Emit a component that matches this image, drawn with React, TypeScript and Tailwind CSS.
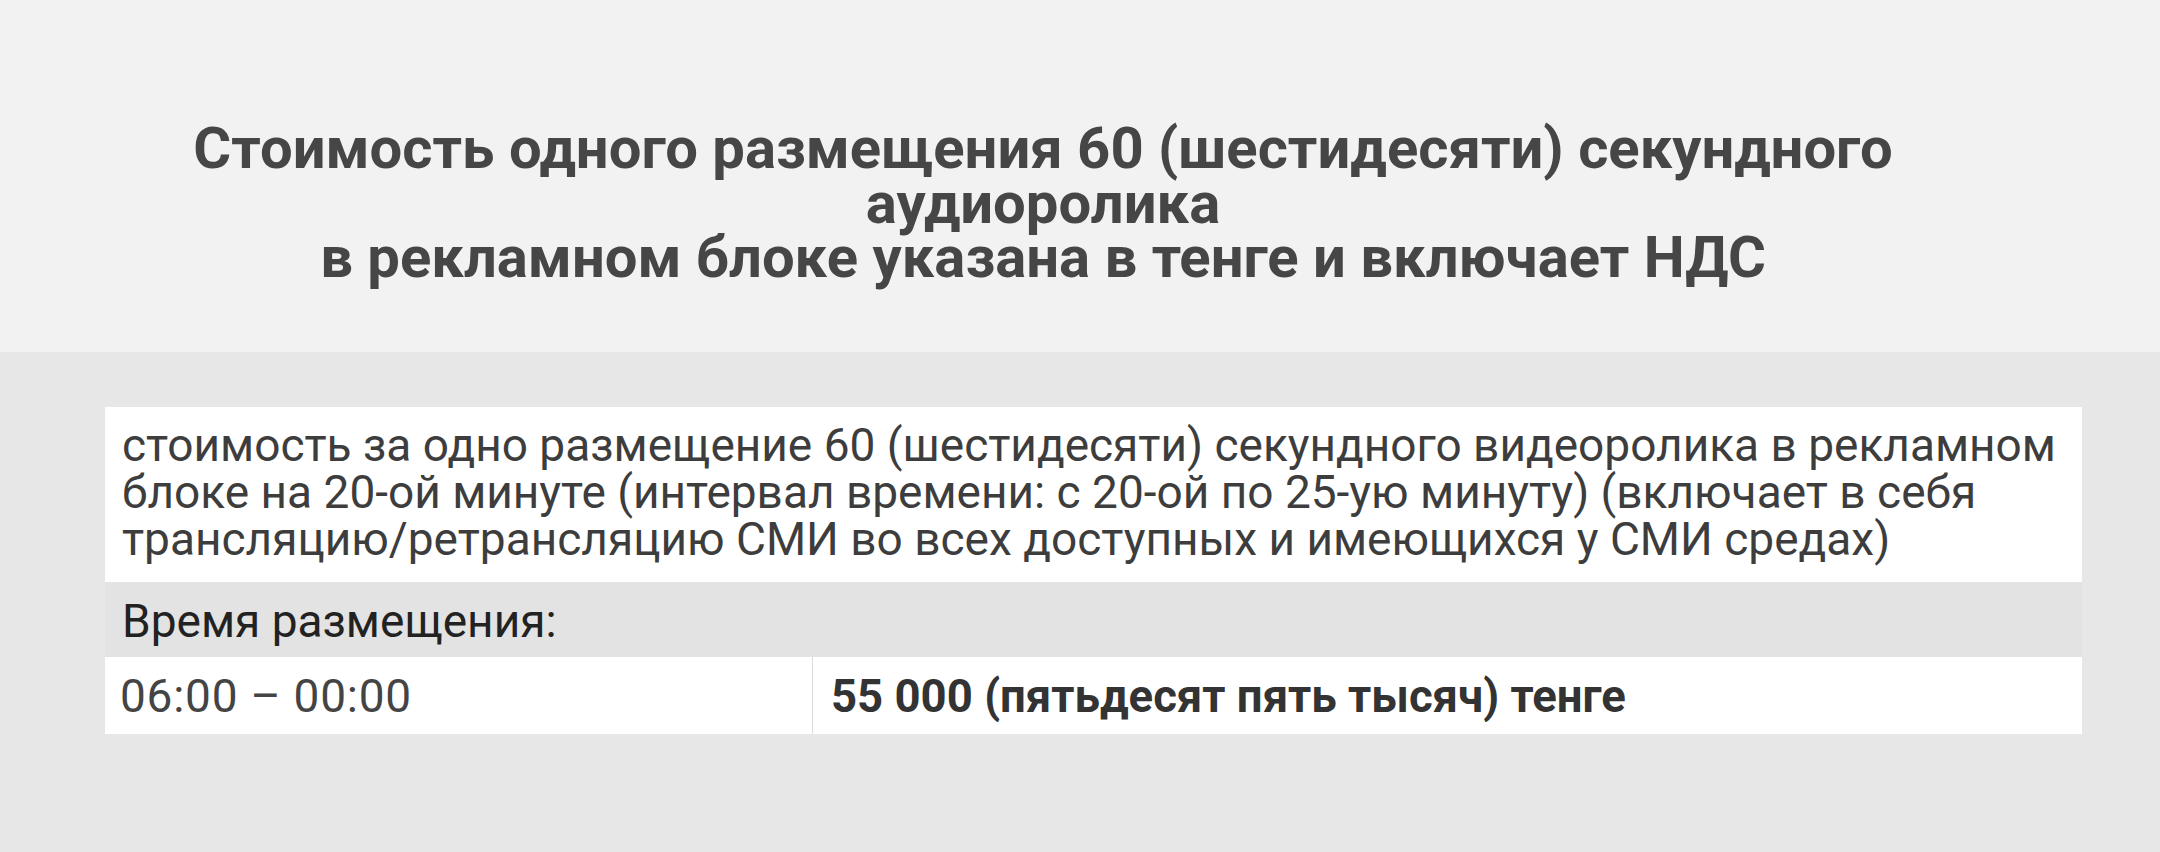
// ** Price block for a single ad placement
const lines = [
  'Стоимость одного размещения 60 (шестидесяти) секундного',
  'аудиоролика',
  'в рекламном блоке указана в тенге и включает НДС',
];

const App = () => {
  return (
    <div className="w-[2160px] h-[852px] flex flex-col font-['Roboto',sans-serif] overflow-hidden">
      {/* Heading band */}
      <div className="h-[352px] bg-[#f2f2f2] pt-[121px] pl-[120px] pr-[194px]">
        <h1 className="text-center text-[58px] leading-[54.5px] font-bold text-[#464646]">
          {lines.map((line) => (
            <div key={line}>{line}</div>
          ))}
        </h1>
      </div>

      {/* Price table */}
      <div className="flex-1 bg-[#e7e7e7] pt-[55px] pl-[105px]">
        <div className="w-[1977px] flex flex-col text-[46px] leading-[47px]">
          <div className="bg-white h-[175px] pt-[15px] pl-[17px] pr-[20px] text-[#3d3d3d]">
            стоимость за одно размещение 60 (шестидесяти) секундного видеоролика в рекламном блоке на 20-ой минуте
            (интервал времени: с 20-ой по 25-ую минуту) (включает в себя трансляцию/ретрансляцию СМИ во всех
            доступных и имеющихся у СМИ средах)
          </div>
          <div className="bg-[#e3e3e3] h-[75px] pt-[16px] pl-[17px] text-[#222]">Время размещения:</div>
          <div className="bg-white h-[77px] flex">
            <div className="w-[708px] pt-[16px] pl-[15px] text-[#444] tracking-[0.75px] border-r border-[#dcdcdc]">
              06:00 – 00:00
            </div>
            <div className="flex-1 pt-[16px] pl-[18px] text-[45.5px] font-bold text-[#333]">
              55 000 (пятьдесят пять тысяч) тенге
            </div>
          </div>
        </div>
      </div>
    </div>
  );
};

export default App;
